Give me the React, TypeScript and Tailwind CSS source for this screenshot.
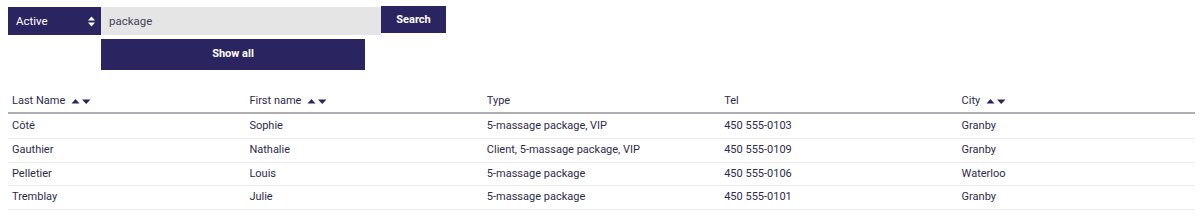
import React from "react";

const rows = [
  ["Côté", "Sophie", "5-massage package, VIP", "450 555-0103", "Granby"],
  ["Gauthier", "Nathalie", "Client, 5-massage package, VIP", "450 555-0109", "Granby"],
  ["Pelletier", "Louis", "5-massage package", "450 555-0106", "Waterloo"],
  ["Tremblay", "Julie", "5-massage package", "450 555-0101", "Granby"],
];

function SortIcon() {
  return (
    <svg width="20" height="7" viewBox="0 0 20 7" className="ml-[6px] inline-block">
      <polygon points="0.5,5.5 4.5,1 8.5,5.5" fill="#2a2560" />
      <polygon points="11,1.5 19.5,1.5 15.25,6" fill="#2a2560" />
    </svg>
  );
}

export default function App() {
  const headers: [string, boolean][] = [
    ["Last Name", true],
    ["First name", true],
    ["Type", false],
    ["Tel", false],
    ["City", true],
  ];
  return (
    <div className="w-[1200px] h-[219px] bg-white text-[#2d2b4a] font-['Roboto',sans-serif] text-[11px]">
      <div className="pl-[8px] pt-[7px] flex flex-col">
        <div className="flex items-start">
          <div className="w-[93px] h-[28px] bg-[#2a2560] text-white flex items-center justify-between pl-[8px] pr-[6px] pt-[2px] text-[11.5px]">
            <span>Active</span>
            <svg width="7" height="11" viewBox="0 0 7 11" className="-mt-[2px]">
              <polygon points="0,4.5 3.5,0.5 7,4.5" fill="white" />
              <polygon points="0,6.5 7,6.5 3.5,10.5" fill="white" />
            </svg>
          </div>
          <div className="w-[280px] h-[28px] bg-[#e5e5e5] flex items-center pl-[8px] pt-[2px] text-[11.5px] text-[#44435a]">
            package
          </div>
          <div className="w-[65px] h-[27px] -mt-[1px] bg-[#2a2560] text-white font-bold flex items-center justify-center pt-[2px] text-[11px]">
            Search
          </div>
        </div>
        <div className="ml-[93px] mt-[4px] w-[264px] h-[31px] bg-[#2a2560] text-white font-bold flex items-center justify-center text-[11px]">
          Show all
        </div>
      </div>
      <div className="mt-[20px] ml-[8px] w-[1187px]">
        <div className="grid grid-cols-5 h-[24px] items-center border-b-2 border-[#b0b0b4]">
          {headers.map(([h, s]) => (
            <div key={h} className="pl-[4px] flex items-center">
              <span>{h}</span>
              {s && <SortIcon />}
            </div>
          ))}
        </div>
        {rows.map((r, i) => (
          <div
            key={i}
            className={`grid grid-cols-5 items-center border-b border-[#ececee] ${i === 0 ? "h-[25px] pt-[1px]" : "h-[23.5px]"}`}
          >
            {r.map((c, j) => (
              <div key={j} className="pl-[4px]">
                {c}
              </div>
            ))}
          </div>
        ))}
      </div>
    </div>
  );
}
